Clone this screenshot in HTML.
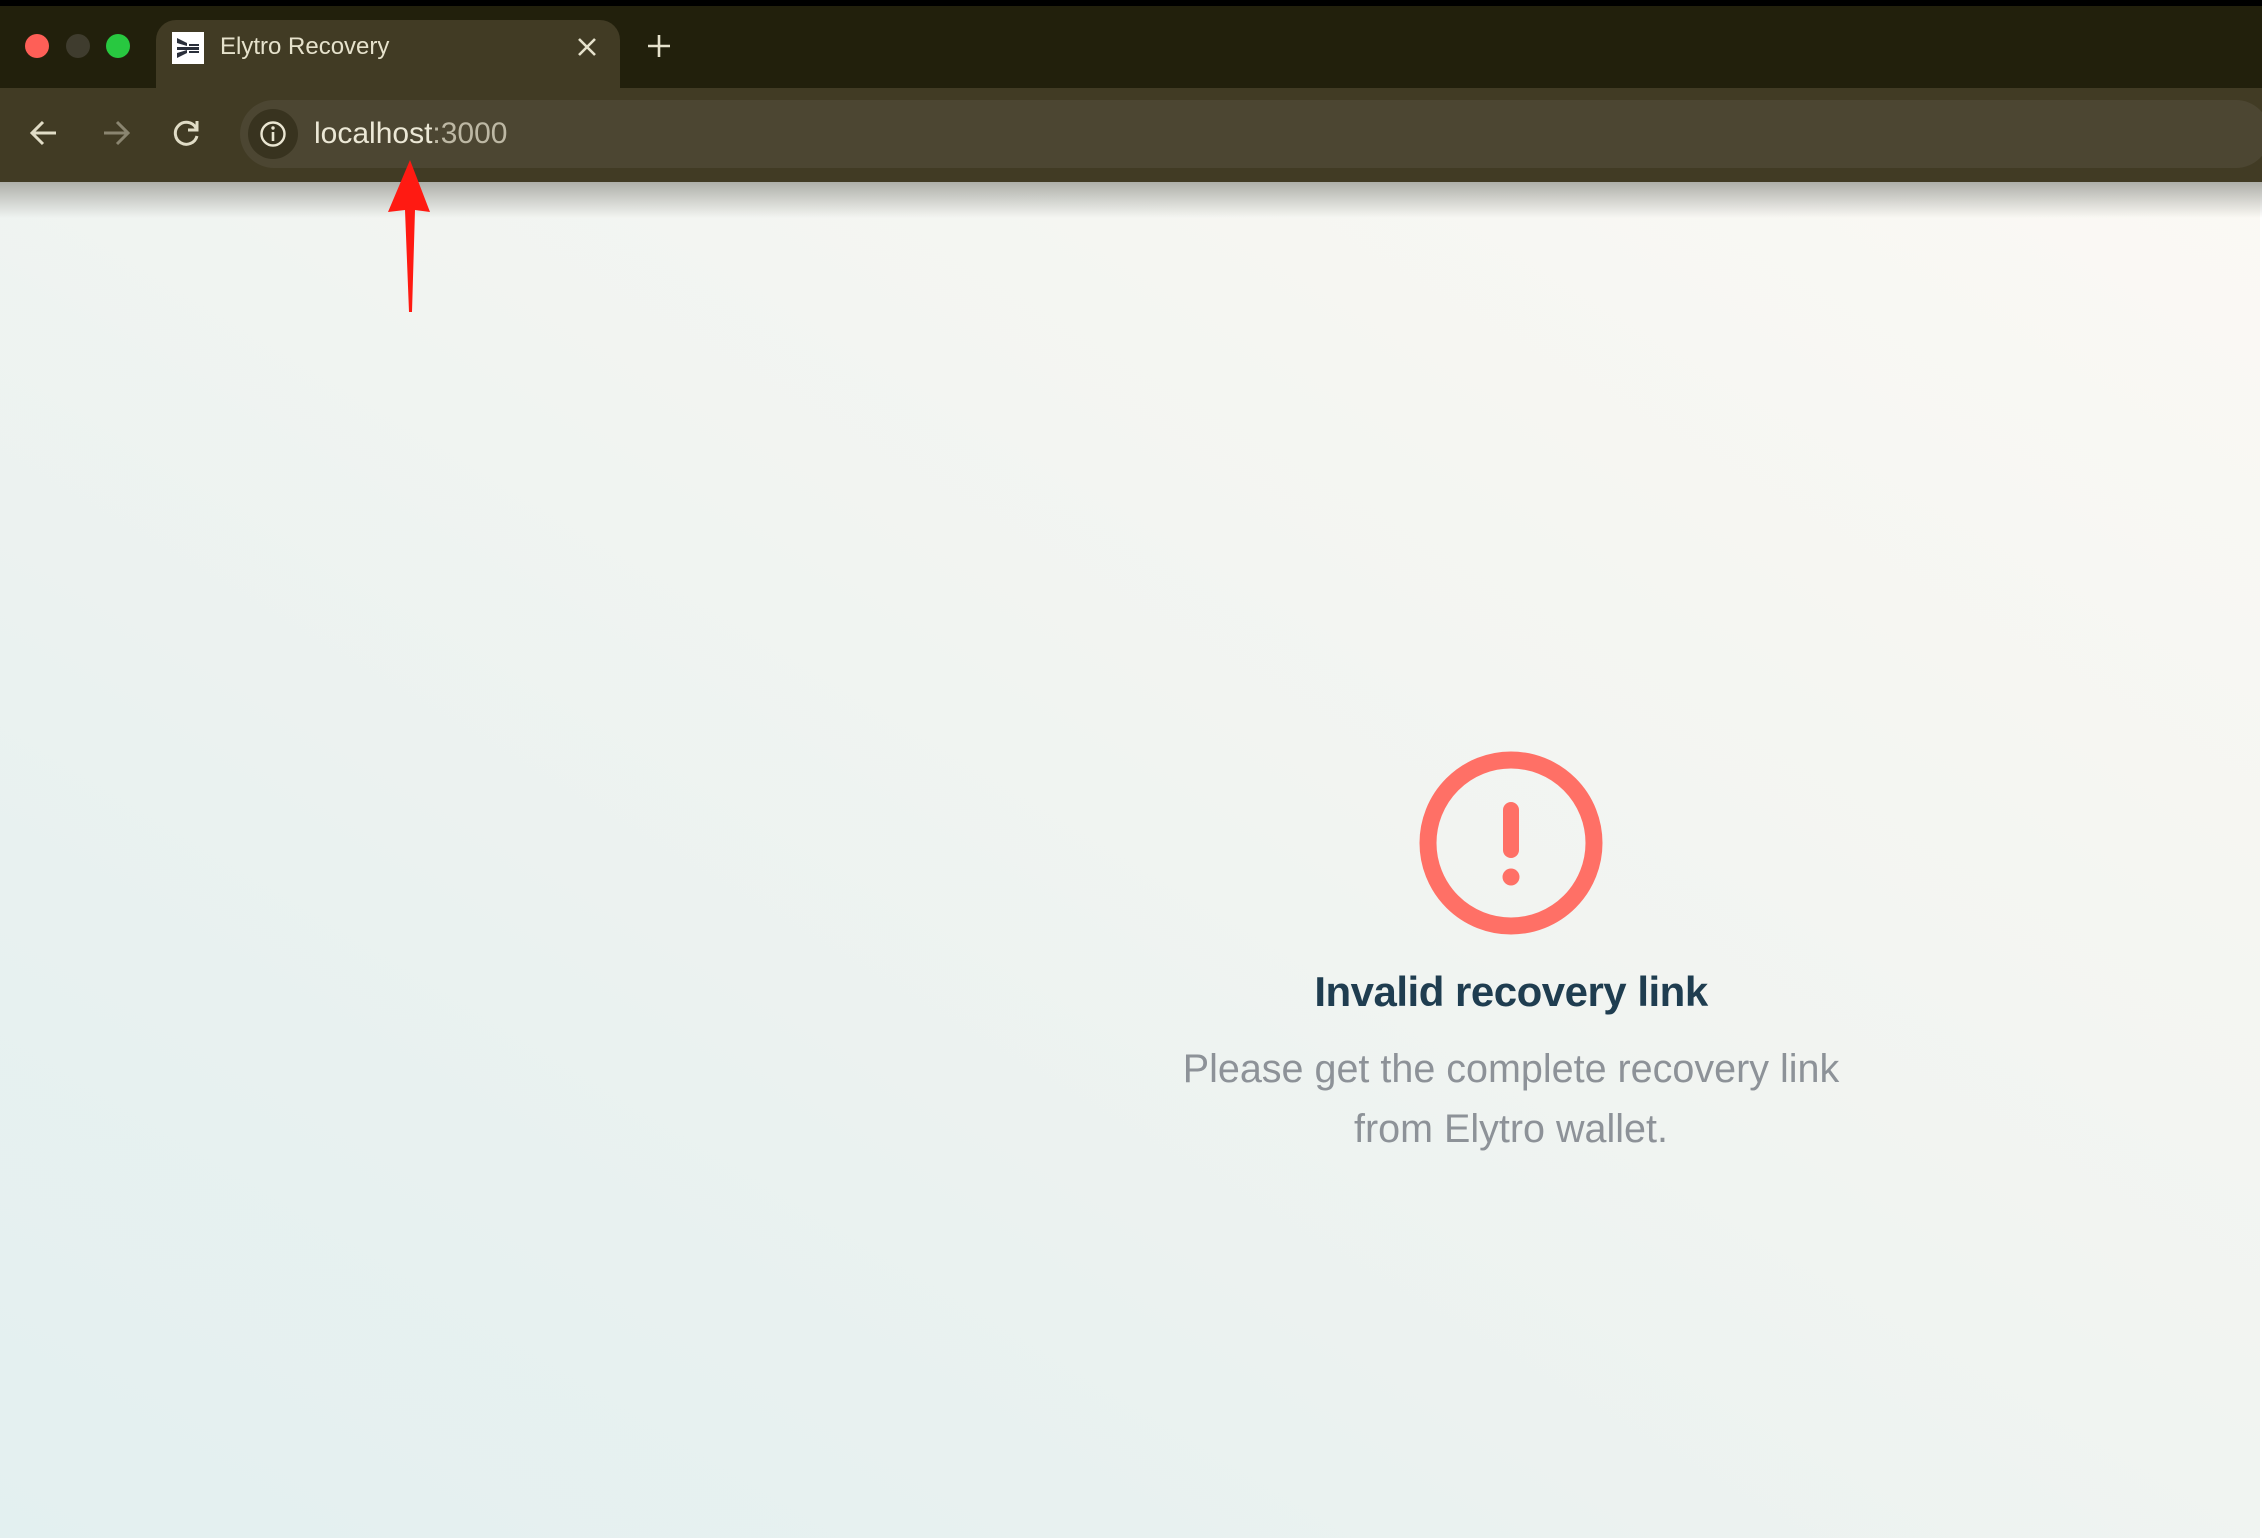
<!DOCTYPE html>
<html><head><meta charset="utf-8"><style>
*{margin:0;padding:0;box-sizing:border-box}
body{width:2262px;height:1540px;overflow:hidden;position:relative;font-family:"Liberation Sans",sans-serif;background:#fff}
#top{position:absolute;left:0;top:0;width:2262px;height:6px;background:#000}
#strip{position:absolute;left:0;top:6px;width:2262px;height:82px;background:#22200c}
#tab{position:absolute;left:156px;top:20px;width:464px;height:72px;background:#413b24;border-radius:20px 20px 0 0}
#toolbar{position:absolute;left:0;top:88px;width:2262px;height:94px;background:#413b24}
#url{position:absolute;left:240px;top:100px;width:2030px;height:68px;background:#4c4632;border-radius:34px}
#content{position:absolute;left:0;top:182px;width:2260px;height:1356px;background:linear-gradient(to bottom left,#fbf9f4 0%,#f1f4f1 45%,#e8f1f0 75%,#e3f0f0 100%)}
#shadow{position:absolute;left:0;top:182px;width:2262px;height:36px;background:linear-gradient(#aeafa9,rgba(240,242,238,0))}
.dot{position:absolute;top:34px;width:24px;height:24px;border-radius:50%}
.t{position:absolute;white-space:nowrap}
</style></head><body>
<div id="content"></div>
<div id="shadow"></div>
<div id="top"></div>
<div id="strip"></div>
<div id="tab"></div>
<div id="toolbar"></div>
<div id="url"></div>
<div class="dot" style="left:25px;background:#fe5f57"></div>
<div class="dot" style="left:66px;background:#3f3c2e"></div>
<div class="dot" style="left:106px;background:#28c840"></div>
<svg style="position:absolute;left:172px;top:32px" width="32" height="32" viewBox="0 0 32 32"><rect width="32" height="32" fill="#fff"/><path d="M5 6 L15 11 L15 14 L5 11Z M5 15h22v3H5z M5 21 L15 18 L15 21 L5 26Z M17 12h10v2H17z M17 19h10v2H17z" fill="#2a2f3a"/></svg>
<div class="t" style="left:220px;top:33px;font-size:24px;color:#e6e2cc">Elytro Recovery</div>
<svg style="position:absolute;left:576px;top:36px" width="22" height="22" viewBox="0 0 22 22"><path d="M3 3L19 19M19 3L3 19" stroke="#e6e2cc" stroke-width="2.6"/></svg>
<svg style="position:absolute;left:646px;top:33px" width="26" height="26" viewBox="0 0 26 26"><path d="M13 2V24M2 13H24" stroke="#e6e2cc" stroke-width="2.6"/></svg>
<svg style="position:absolute;left:28px;top:118px" width="32" height="30" viewBox="0 0 32 30"><path d="M28 15H5M15 4L4 15L15 26" stroke="#e0dcc6" stroke-width="3" fill="none"/></svg>
<svg style="position:absolute;left:100px;top:118px" width="32" height="30" viewBox="0 0 32 30"><path d="M4 15H27M17 4L28 15L17 26" stroke="#8a8570" stroke-width="3" fill="none"/></svg>
<svg style="position:absolute;left:172px;top:118px" width="30" height="30" viewBox="0 0 30 30"><path d="M24 10A11 11 0 1 0 25 18" stroke="#e0dcc6" stroke-width="3" fill="none"/><path d="M25 3V12H16" stroke="#e0dcc6" stroke-width="3" fill="none"/></svg>
<div style="position:absolute;left:248px;top:109px;width:50px;height:50px;border-radius:50%;background:#38331f"></div>
<svg style="position:absolute;left:259px;top:120px" width="28" height="28" viewBox="0 0 28 28"><circle cx="14" cy="14" r="11.5" stroke="#eae6d2" stroke-width="2.4" fill="none"/><path d="M14 12V21" stroke="#eae6d2" stroke-width="2.6"/><circle cx="14" cy="8" r="1.7" fill="#eae6d2"/></svg>
<div class="t" style="left:314px;top:117px;font-size:30px;color:#ece8d6">localhost<span style="color:#bdb8a4">:3000</span></div>
<svg style="position:absolute;left:380px;top:155px" width="60" height="160" viewBox="0 0 60 160"><path d="M30 5 L50 57 L35 55 L32 157 L29 157 L25 55 L8 57Z" fill="#ff1a12"/></svg>
<svg style="position:absolute;left:1419px;top:751px" width="184" height="184" viewBox="0 0 184 184"><circle cx="92" cy="92" r="83" stroke="#ff7066" stroke-width="17" fill="none"/><path d="M92 59V99" stroke="#ff7066" stroke-width="16" stroke-linecap="round"/><circle cx="92" cy="126" r="8.5" fill="#ff7066"/></svg>
<div class="t" style="left:0;width:3022px;text-align:center;top:968px;font-size:42px;font-weight:bold;color:#1f3d50;letter-spacing:-0.5px">Invalid recovery link</div>
<div class="t" style="left:0;width:3022px;text-align:center;top:1039px;font-size:39.5px;line-height:60px;color:#8d9298">Please get the complete recovery link<br>from Elytro wallet.</div>
</body></html>
